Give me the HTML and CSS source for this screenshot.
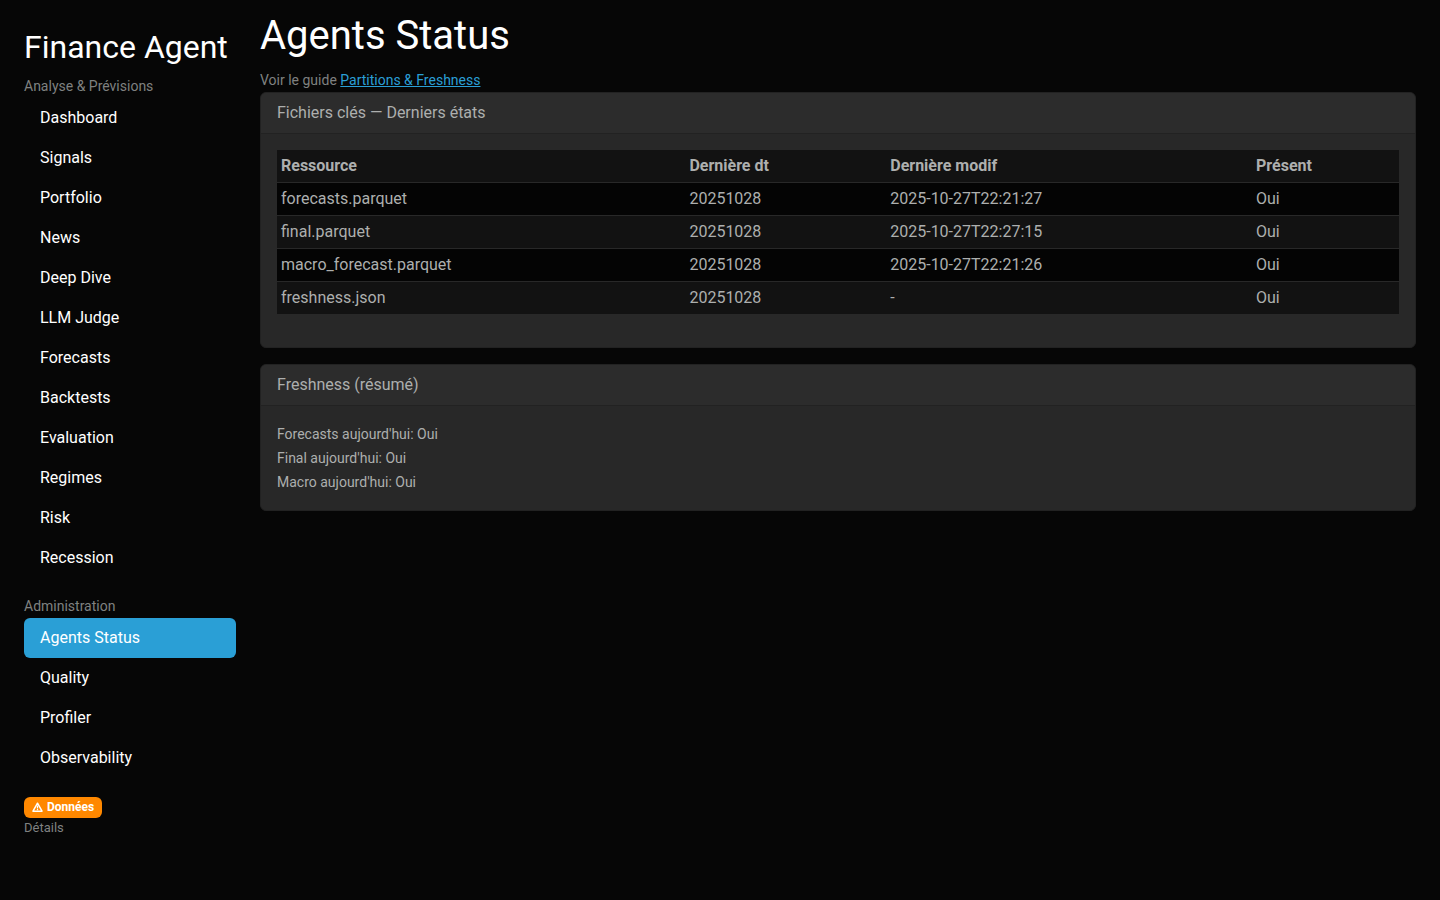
FILE: index.html
```html
<!DOCTYPE html>
<html lang="fr">
<head>
<meta charset="utf-8">
<meta name="viewport" content="width=device-width, initial-scale=1">
<title>Agents Status</title>
<link rel="stylesheet" href="styles.css">
</head>
<body>
<div class="layout">
  <aside class="sidebar">
    <h2 class="brand">Finance Agent</h2>
    <p class="section-label">Analyse &amp; Prévisions</p>
    <nav class="nav" aria-label="Analyse &amp; Prévisions">
      <a class="nav-link" href="#dashboard">Dashboard</a>
      <a class="nav-link" href="#signals">Signals</a>
      <a class="nav-link" href="#portfolio">Portfolio</a>
      <a class="nav-link" href="#news">News</a>
      <a class="nav-link" href="#deep-dive">Deep Dive</a>
      <a class="nav-link" href="#llm-judge">LLM Judge</a>
      <a class="nav-link" href="#forecasts">Forecasts</a>
      <a class="nav-link" href="#backtests">Backtests</a>
      <a class="nav-link" href="#evaluation">Evaluation</a>
      <a class="nav-link" href="#regimes">Regimes</a>
      <a class="nav-link" href="#risk">Risk</a>
      <a class="nav-link" href="#recession">Recession</a>
    </nav>
    <p class="section-label">Administration</p>
    <nav class="nav" aria-label="Administration">
      <a class="nav-link active" href="#agents" aria-current="page">Agents Status</a>
      <a class="nav-link" href="#quality">Quality</a>
      <a class="nav-link" href="#profiler">Profiler</a>
      <a class="nav-link" href="#observability">Observability</a>
    </nav>
    <div class="data-status">
      <span class="badge"><svg class="badge-icon" viewBox="0 0 11 11" aria-hidden="true"><path d="M5.5 1.2 10 9.2H1Z" fill="none" stroke="currentColor" stroke-width="1.5" stroke-linejoin="round"/><path d="M5.5 3.6v2.8M5.5 7v1.2" stroke="currentColor" stroke-width="1.3"/></svg>Données</span>
      <span class="details">Détails</span>
    </div>
  </aside>
  <main class="content">
    <h1 class="title">Agents Status</h1>
    <p class="guide">Voir le guide <a class="guide-link" href="#guide">Partitions &amp; Freshness</a></p>
    <section class="card">
      <div class="card-header">Fichiers clés — Derniers états</div>
      <div class="card-body">
        <table class="table">
          <colgroup><col class="col-resource"><col class="col-dt"><col class="col-modif"><col class="col-present"></colgroup>
          <thead>
            <tr><th scope="col">Ressource</th><th scope="col">Dernière dt</th><th scope="col">Dernière modif</th><th scope="col">Présent</th></tr>
          </thead>
          <tbody>
            <tr><td>forecasts.parquet</td><td>20251028</td><td>2025-10-27T22:21:27</td><td>Oui</td></tr>
            <tr><td>final.parquet</td><td>20251028</td><td>2025-10-27T22:27:15</td><td>Oui</td></tr>
            <tr><td>macro_forecast.parquet</td><td>20251028</td><td>2025-10-27T22:21:26</td><td>Oui</td></tr>
            <tr><td>freshness.json</td><td>20251028</td><td>-</td><td>Oui</td></tr>
          </tbody>
        </table>
      </div>
    </section>
    <section class="card">
      <div class="card-header">Freshness (résumé)</div>
      <div class="card-body summary">
        <div>Forecasts aujourd'hui: Oui</div>
        <div>Final aujourd'hui: Oui</div>
        <div>Macro aujourd'hui: Oui</div>
      </div>
    </section>
  </main>
</div>
</body>
</html>
```
FILE: styles.css
```css
*, *::before, *::after { box-sizing: border-box; }

body {
  margin: 0;
  background: #060606;
  color: #adafae;
  font: 400 16px/24px Roboto, "Liberation Sans", sans-serif;
}

h1, h2, p { margin: 0; }

.layout {
  display: grid;
  grid-template-columns: minmax(0, 2fr) minmax(0, 10fr);
  padding: 0 12px;
}

.sidebar { padding: 28px 12px 16px; }

.brand {
  margin-bottom: 8px;
  color: #fff;
  font-size: 32px;
  font-weight: 400;
  line-height: 38px;
  white-space: nowrap;
}

.section-label, .guide {
  color: #7f8180;
  font-size: 14px;
}

.nav {
  display: flex;
  flex-direction: column;
  margin-bottom: 16px;
}

.nav-link {
  padding: 8px 16px;
  border-radius: 6px;
  color: #fff;
  text-decoration: none;
}

.nav-link.active { background: #2a9fd6; }

.data-status {
  display: flex;
  flex-direction: column;
  align-items: flex-start;
  padding-top: 3px;
}

.badge {
  display: inline-flex;
  align-items: center;
  gap: 4px;
  padding: 4px 8px;
  border-radius: 6px;
  background: #f80;
  color: #fff;
  font-size: 12px;
  font-weight: 700;
  line-height: 13px;
}

.badge-icon { width: 11px; height: 11px; }

.details {
  color: #7f8180;
  font-size: 13px;
  line-height: 20px;
}

.content { padding: 12px 12px 0; }

.title {
  margin-bottom: 8px;
  color: #fff;
  font-size: 40px;
  font-weight: 400;
  line-height: 48px;
}

.guide-link { color: #2a9fd6; }

.card {
  margin-bottom: 16px;
  border: 1px solid #222;
  border-radius: 6px;
  background: #282828;
  overflow: hidden;
}

.card-header {
  padding: 8px 16px;
  border-bottom: 1px solid #222;
  background: #2c2c2c;
}

.card-body { padding: 16px; }

.table {
  width: 100%;
  margin-bottom: 16px;
  border-collapse: collapse;
  table-layout: fixed;
}

.col-resource { width: 36.4%; }
.col-dt { width: 17.9%; }
.col-modif { width: 32.6%; }
.col-present { width: 13.1%; }

.table th, .table td {
  padding: 4px;
  border-bottom: 1px solid #282828;
  text-align: left;
}

.table th { font-weight: 700; }
.table tr { background: #121212; }
.table tbody tr:nth-child(odd) { background: #040404; }

.summary { font-size: 14px; }
```
